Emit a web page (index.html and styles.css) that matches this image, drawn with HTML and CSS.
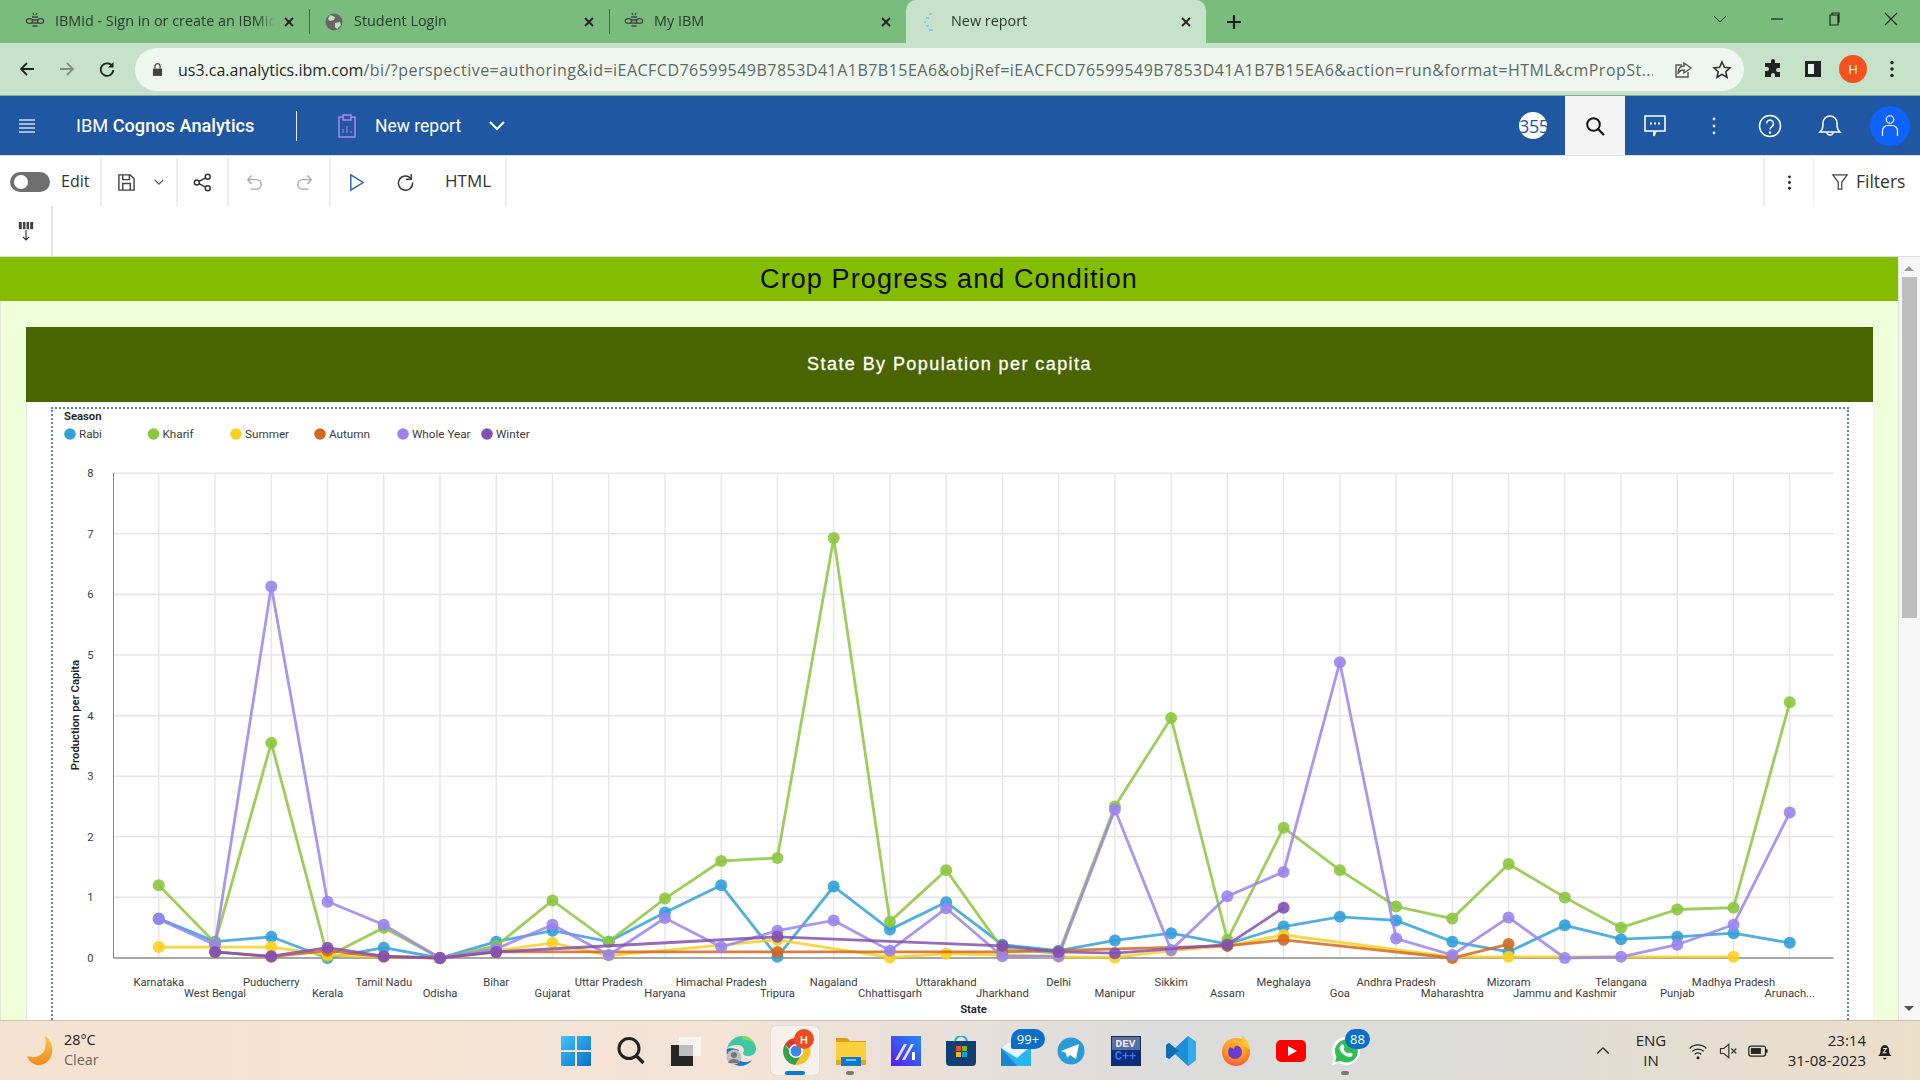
FILE: index.html
```html
<!DOCTYPE html>
<html lang="en">
  <head>
    <meta charset="utf-8" />
    <meta name="viewport" content="width=device-width, initial-scale=1" />
    <title>New report</title>
    <link rel="stylesheet" href="styles.css">
    <script src="chart.js"></script>
  </head>
  <body>
    <!-- browser tabs -->
    <div class="tabstrip">
      <div class="tab">
        <svg class="favicon" viewBox="0 0 20 20"><g fill="none" stroke="#444" stroke-width="1.3"><ellipse cx="4.5" cy="9" rx="3.2" ry="2.4"/><ellipse cx="15.5" cy="9" rx="3.2" ry="2.4"/><path d="M7 5h6M6.5 8h7M6.5 11h7M7.5 14h5M9 3l-1-2M11 3l1-2"/></g></svg>
        <span class="tab-title">IBMid - Sign in or create an IBMid</span>
        <svg class="tab-x" viewBox="0 0 12 12"><path d="M2 2l8 8M10 2l-8 8" stroke="#222" stroke-width="1.8"/></svg>
      </div>
      <div class="tab">
        <svg class="favicon" viewBox="0 0 20 20"><circle cx="10" cy="10" r="8.5" fill="#666"/><path d="M6 3l5 2-1 3-4 1-2-2zM11 11l5-1 1 3-4 4-2-2z" fill="#c5dcc6"/></svg>
        <span class="tab-title">Student Login</span>
        <svg class="tab-x" viewBox="0 0 12 12"><path d="M2 2l8 8M10 2l-8 8" stroke="#222" stroke-width="1.8"/></svg>
      </div>
      <div class="tab tab-last">
        <svg class="favicon" viewBox="0 0 20 20"><g fill="none" stroke="#444" stroke-width="1.3"><ellipse cx="4.5" cy="9" rx="3.2" ry="2.4"/><ellipse cx="15.5" cy="9" rx="3.2" ry="2.4"/><path d="M7 5h6M6.5 8h7M6.5 11h7M7.5 14h5M9 3l-1-2M11 3l1-2"/></g></svg>
        <span class="tab-title">My IBM</span>
        <svg class="tab-x" viewBox="0 0 12 12"><path d="M2 2l8 8M10 2l-8 8" stroke="#222" stroke-width="1.8"/></svg>
      </div>
      <div class="tab tab-active">
        <svg class="favicon" viewBox="0 0 20 20"><path d="M11 2H8M8 6H5M5 10H3M5 14h3M8 18h4" stroke="#6ec3e8" stroke-width="1.6" fill="none"/></svg>
        <span class="tab-title">New report</span>
        <svg class="tab-x" viewBox="0 0 12 12"><path d="M2 2l8 8M10 2l-8 8" stroke="#222" stroke-width="1.8"/></svg>
      </div>
      <svg class="tab-plus" viewBox="0 0 16 16"><path d="M8 1v14M1 8h14" stroke="#1f1f1f" stroke-width="2.2"/></svg>
      <div class="win-btns">
        <svg viewBox="0 0 16 16"><path d="M2 5l6 6 6-6" fill="none" stroke="#333" stroke-width="1"/></svg>
        <svg viewBox="0 0 16 16"><path d="M2 8h12" stroke="#222" stroke-width="1.2"/></svg>
        <svg viewBox="0 0 16 16"><path d="M4 4h8v10H4zM6 4V2h7v9h-1" fill="none" stroke="#222" stroke-width="1.2"/></svg>
        <svg viewBox="0 0 16 16"><path d="M2 2l12 12M14 2L2 14" stroke="#222" stroke-width="1.1"/></svg>
      </div>
    </div>

    <!-- address bar -->
    <div class="addr-row">
      <div class="nav-btns">
        <svg viewBox="0 0 18 18"><path d="M16 9H3M9 3L3 9l6 6" fill="none" stroke="#222" stroke-width="1.8"/></svg>
        <svg viewBox="0 0 18 18"><path d="M2 9h13M9 3l6 6-6 6" fill="none" stroke="#7d9080" stroke-width="1.8"/></svg>
        <svg viewBox="0 0 18 18"><path d="M14.5 6.5A6.3 6.3 0 1 0 15.3 10" fill="none" stroke="#222" stroke-width="1.8"/><path d="M15.5 2v5.5H10z" fill="#222"/></svg>
      </div>
      <div class="urlbar">
        <svg class="lock" viewBox="0 0 12 16"><path d="M1 7h10v8H1z" fill="#444"/><path d="M3.2 7V4.5a2.8 2.8 0 0 1 5.6 0V7" fill="none" stroke="#444" stroke-width="1.4"/></svg>
        <span class="url"><b>us3.ca.analytics.ibm.com</b>/bi/?perspective=authoring&amp;id=iEACFCD76599549B7853D41A1B7B15EA6&amp;objRef=iEACFCD76599549B7853D41A1B7B15EA6&amp;action=run&amp;format=HTML&amp;cmPropSt...</span>
        <svg class="url-icon" viewBox="0 0 20 20"><path d="M9 5H3v12h12v-5" fill="none" stroke="#555" stroke-width="1.4"/><path d="M11 3l7 5-7 5v-3c-3 0-5 1-6 4 0-5 2-8 6-8z" fill="none" stroke="#555" stroke-width="1.4"/></svg>
        <svg class="url-icon" viewBox="0 0 20 20"><path d="M10 2l2.4 5.3 5.6.6-4.2 3.8 1.2 5.6L10 14.4l-5 2.9 1.2-5.6L2 7.9l5.6-.6z" fill="none" stroke="#333" stroke-width="1.6"/></svg>
      </div>
      <div class="ext-btns">
        <svg viewBox="0 0 20 20"><path d="M8 2a2 2 0 0 1 4 0v2h5v5h-2a2 2 0 0 0 0 4h2v5h-5v-2a2 2 0 0 0-4 0v2H2v-6h2a2 2 0 0 0 0-4H2V4h6z" fill="#222"/></svg>
        <svg viewBox="0 0 20 20"><path d="M2 2h16v16H2z" fill="#222"/><path d="M5 5h6v10H5z" fill="#e9f3ea"/></svg>
        <span class="avatar">H</span>
        <svg viewBox="0 0 20 20"><circle cx="10" cy="3.5" r="1.7" fill="#222"/><circle cx="10" cy="10" r="1.7" fill="#222"/><circle cx="10" cy="16.5" r="1.7" fill="#222"/></svg>
      </div>
    </div>

    <!-- cognos header -->
    <header class="app-head">
      <svg class="hamb" viewBox="0 0 16 14"><path d="M0 1h16M0 5h16M0 9h16M0 13h16" stroke="#cfdcf0" stroke-width="1.3"/></svg>
      <div class="brand">IBM <b>Cognos Analytics</b></div>
      <div class="head-div"></div>
      <svg class="clip" viewBox="0 0 20 24"><g fill="none" stroke="#a98cf2" stroke-width="1.4"><path d="M6 3H2v20h16V3h-4"/><path d="M6 1h8v5H6z"/><path d="M6 19v-4M10 19v-7M14 19v-2" stroke-width="1"/></g></svg>
      <span class="report-name">New report</span>
      <svg class="head-chev" viewBox="0 0 16 10"><path d="M1 1l7 7 7-7" fill="none" stroke="#fff" stroke-width="2"/></svg>
      <div class="head-right">
        <span class="counter">355</span>
        <div class="search-tile"><svg viewBox="0 0 20 20"><circle cx="8.5" cy="8.5" r="6.3" fill="none" stroke="#161616" stroke-width="2"/><path d="M13 13l6 6" stroke="#161616" stroke-width="2.2"/></svg></div>
        <svg class="h-ico h-chat" viewBox="0 0 24 24"><path d="M2 2h20v15H13l-2 5v-5H2z" fill="none" stroke="#fff" stroke-width="1.6"/><path d="M7 9.500h2M11 9.500h2M15 9.500h2" stroke="#fff" stroke-width="2"/></svg>
        <svg class="h-ico h-dots" viewBox="0 0 24 24"><circle cx="12" cy="5" r="1.400" fill="#dfe8f5"/><circle cx="12" cy="12" r="1.400" fill="#dfe8f5"/><circle cx="12" cy="19" r="1.400" fill="#dfe8f5"/></svg>
        <svg class="h-ico h-help" viewBox="0 0 24 24"><circle cx="12" cy="12" r="10.500" fill="none" stroke="#fff" stroke-width="1.500"/><path d="M8.500 9.500a3.500 3.500 0 1 1 5.500 3c-1.300.9-2 1.500-2 3" fill="none" stroke="#fff" stroke-width="1.500"/><circle cx="12" cy="18.500" r="1.200" fill="#fff"/></svg>
        <svg class="h-ico h-bell" viewBox="0 0 24 24"><path d="M12 2a7 7 0 0 0-7 7c0 6-1 7-3 9h20c-2-2-3-3-3-9a7 7 0 0 0-7-7z" fill="none" stroke="#fff" stroke-width="1.500"/><path d="M9 18a3 3 0 0 0 6 0" fill="none" stroke="#fff" stroke-width="1.500"/></svg>
        <div class="user"><svg viewBox="0 0 24 30"><circle cx="12" cy="7" r="5" fill="none" stroke="#fff" stroke-width="1.600"/><path d="M2 29v-7a7 7 0 0 1 7-7h6a7 7 0 0 1 7 7v7" fill="none" stroke="#fff" stroke-width="1.600"/></svg></div>
      </div>
    </header>

    <!-- report toolbar -->
    <div class="tools">
      <div class="tool-group tg-edit"><span class="toggle"></span><span class="tool-text">Edit</span></div>
      <div class="tool-group tg-save">
        <svg viewBox="0 0 20 20"><path d="M2 2h12l4 4v12H2z M6 2v5h7V2 M6 18v-7h8v7" fill="none" stroke="#444" stroke-width="1.500"/></svg>
        <svg class="tiny" viewBox="0 0 12 8"><path d="M1 1l5 5 5-5" fill="none" stroke="#555" stroke-width="1.300"/></svg>
      </div>
      <div class="tool-group tg-share">
        <svg viewBox="0 0 20 20"><g fill="none" stroke="#333" stroke-width="1.500"><circle cx="4" cy="10" r="2.600"/><circle cx="15.500" cy="4" r="2.600"/><circle cx="15.500" cy="16" r="2.600"/><path d="M6.300 8.800l7-3.600M6.300 11.200l7 3.600"/></g></svg>
      </div>
      <div class="tool-group tg-undo">
        <svg viewBox="0 0 20 20"><path d="M3 7h9a5 5 0 0 1 0 10H6M7 2.500L3 7l4 4.500" fill="none" stroke="#a8a8a8" stroke-width="1.500"/></svg>
        <svg viewBox="0 0 20 20"><path d="M17 7H8a5 5 0 0 0 0 10h6M13 2.500L17 7l-4 4.500" fill="none" stroke="#a8a8a8" stroke-width="1.500"/></svg>
      </div>
      <div class="tool-group tg-run">
        <svg viewBox="0 0 20 20"><path d="M4 2l13 8-13 8z" fill="none" stroke="#2a5fb4" stroke-width="1.500"/></svg>
        <svg viewBox="0 0 20 20"><path d="M15.500 5.500A7.500 7.500 0 1 0 17.500 10" fill="none" stroke="#333" stroke-width="1.500"/><path d="M16 1v5.500h-5.500" fill="none" stroke="#333" stroke-width="1.500"/></svg>
        <span class="tool-text html">HTML</span>
      </div>
      <div class="tool-fill"></div>
      <div class="tool-group tg-more"><svg viewBox="0 0 20 20"><circle cx="10" cy="4" r="1.500" fill="#222"/><circle cx="10" cy="10" r="1.500" fill="#222"/><circle cx="10" cy="16" r="1.500" fill="#222"/></svg></div>
      <div class="tool-group tg-filter">
        <svg viewBox="0 0 20 20"><path d="M2 2h16l-6 8v8H8v-8z" fill="none" stroke="#444" stroke-width="1.400"/></svg>
        <span class="tool-text filters">Filters</span>
      </div>
    </div>
    <div class="tools-two">
      <div class="tool-cell"><svg viewBox="0 0 20 24"><path d="M2 2h16v8H2z" fill="#444"/><path d="M6 2v8M10 2v8M14 2v8" stroke="#fff" stroke-width="1.200"/><path d="M10 11v11M6.500 18.500l3.500 3.500 3.500-3.500" fill="none" stroke="#333" stroke-width="1.300"/></svg></div>
    </div>

    <!-- the report itself -->
    <div class="viewport">
      <main class="report">
        <h1 class="rep-title">Crop Progress and Condition</h1>
        <div class="rep-body">
          <h2 class="rep-sub">State By Population per capita</h2>
          <div class="chart-panel">
            <div class="chart-box" id="chartBox"></div>
          </div>
        </div>
      </main>
      <aside class="scroll">
        <span class="arrow-up"></span>
        <span class="thumb"></span>
        <span class="arrow-down"></span>
      </aside>
    </div>

    <!-- windows taskbar -->
    <footer class="taskbar">
      <div class="weather">
        <svg viewBox="0 0 28 32"><defs><linearGradient id="moon" x1="0" y1="0" x2="0" y2="1"><stop offset="0" stop-color="#f7c845"/><stop offset="1" stop-color="#f08a1d"/></linearGradient></defs><path d="M19 1c9 6 10 19 2 26-7 6-17 3-20-6 8 3 15 0 18-7 1-4 1-8 0-13z" fill="url(#moon)"/></svg>
        <div class="weather-txt"><span>28°C</span><span class="grey">Clear</span></div>
      </div>
      <div class="apps">
        <div class="app"><svg viewBox="0 0 30 30"><defs><linearGradient id="win" x1="0" y1="0" x2="1" y2="1"><stop offset="0" stop-color="#3ec6f7"/><stop offset="1" stop-color="#0a6fc9"/></linearGradient></defs><path d="M0 1a1 1 0 0 1 1-1h13v14H0zM16 0h13a1 1 0 0 1 1 1v13H16zM0 16h14v14H1a1 1 0 0 1-1-1zM16 16h14v13a1 1 0 0 1-1 1H16z" fill="url(#win)"/></svg></div>
        <div class="app"><svg viewBox="0 0 30 30"><circle cx="13" cy="12.500" r="10" fill="none" stroke="#222" stroke-width="3"/><path d="M20.500 20l7 7" stroke="#222" stroke-width="3.400"/></svg></div>
        <div class="app"><svg viewBox="0 0 30 30"><path d="M8 1h22v19H8z" fill="#fbf8f6" opacity=".75"/><path d="M0 9h22v21H0z" fill="#262626"/><path d="M8 9h14v11H8z" fill="#bdbdbd"/></svg></div>
        <div class="app"><svg viewBox="0 0 30 30"><path d="M1 13C3 4 10 0 16 0c8 0 14 6 14 13 0 5-4 7-8 7-3 0-5-1-5-3 0-1 1-2 1-3 0-3-3-5-7-5-5 0-9 2-10 4z" fill="#3fc6a3"/><path d="M16 0c8 0 14 6 14 13 0-5-5-9-11-9-2 0-4-2-3-4z" fill="#7fd95b"/><path d="M1 13c-2 9 5 17 13 17 5 0 9-2 12-6-3 2-8 3-11 1-4-2-5-7-2-11-5-2-10-2-12-1z" fill="#1c78d0"/><circle cx="8" cy="21" r="7.500" fill="#bfc0c0"/><circle cx="8" cy="19" r="3" fill="#777"/><path d="M2 27c1-3 3-4 6-4s5 1 6 4z" fill="#777"/></svg></div>
        <div class="app app-on">
          <svg viewBox="0 0 30 30"><path d="M4 8A14 14 0 0 1 28 9H15a6 6 0 0 0-6 5z" fill="#d93a2e"/><path d="M28 9a14 14 0 0 1-14 20l7-11a7 7 0 0 0-1-9z" fill="#f6c026"/><path d="M4 8a14 14 0 0 0 10 21l7-11a7 7 0 0 1-11-1z" fill="#33a150"/><circle cx="15" cy="15" r="7" fill="#fff"/><circle cx="15" cy="15" r="5.500" fill="#4285e8"/></svg>
          <span class="badge-h">H</span>
        </div>
        <div class="app app-open"><svg viewBox="0 0 30 30"><path d="M0 2h11l3 3h16v6H0z" fill="#dc9f10"/><path d="M0 6h30v22H0z" fill="#fad13c"/><path d="M0 24h30v5H0z" fill="#e6a913"/><path d="M5 21h20v9H5z" fill="#0f78c8"/><path d="M10 24h10" stroke="#9ed6f7" stroke-width="1.500"/></svg></div>
        <div class="app"><svg viewBox="0 0 30 30"><defs><linearGradient id="maple" x1="0" y1="1" x2="1" y2="0"><stop offset="0" stop-color="#5a1bf0"/><stop offset="1" stop-color="#1f8df0"/></linearGradient></defs><path d="M0 0h30v30H0z" fill="url(#maple)"/><path d="M4 24L13 8h3L7 24zM11 24l9-16h3L14 24z" fill="#e7e2ff"/><path d="M21 16h3v8h-3z" fill="#fff"/></svg></div>
        <div class="app"><svg viewBox="0 0 30 30"><path d="M9 6a6 6 0 0 1 12 0" fill="none" stroke="#28a7e0" stroke-width="2"/><path d="M0 5h30v21a4 4 0 0 1-4 4H4a4 4 0 0 1-4-4z" fill="#113f74"/><path d="M10 10h5v5h-5z" fill="#f25022"/><path d="M16 10h5v5h-5z" fill="#7fba00"/><path d="M10 16h5v5h-5z" fill="#ffb900"/><path d="M16 16h5v5h-5z" fill="#00a4ef"/></svg></div>
        <div class="app"><svg viewBox="0 0 30 30"><path d="M0 12l6-5h24v23H0z" fill="#29b5ee"/><path d="M0 12l16 10L30 10v-3H6z" fill="#e8f6fc"/><path d="M0 12l16 18H0z" fill="#1a85cf"/></svg><span class="badge-n badge-wide">99+</span></div>
        <div class="app"><svg viewBox="0 0 30 30"><circle cx="15" cy="15" r="13.500" fill="#2a9bd6"/><path d="M5 15L23 8l-3 15-6-4-3 3-1-5z" fill="#fff"/></svg></div>
        <div class="app"><div class="dev-ico"><span>DEV</span><span class="dev-c">C++</span></div></div>
        <div class="app"><svg viewBox="0 0 30 30"><path d="M22 0l8 6v18l-8 6-13-12-6 5-3-2V9l3-2 6 5z" fill="#1d8fd8"/><path d="M22 0l8 6v18l-8 6z" fill="#35a9ea"/><path d="M9 12L3 7 0 9v12l3 2 6-5 4-3z" fill="#0f6db3"/></svg></div>
        <div class="app"><svg viewBox="0 0 30 30"><defs><radialGradient id="ff" cx=".5" cy=".3" r=".8"><stop offset="0" stop-color="#ffcf3a"/><stop offset=".6" stop-color="#ff8a1f"/><stop offset="1" stop-color="#f23f5a"/></radialGradient></defs><circle cx="15" cy="16" r="14" fill="url(#ff)"/><path d="M21 0c6 5 8 9 8 14l-9-6z" fill="#ffc53a"/><circle cx="14" cy="16" r="7" fill="#6b3bc9"/><path d="M7 10c3-4 9-4 12-1-4 0-6 2-6 4z" fill="#ff9a2a"/></svg></div>
        <div class="app"><svg viewBox="0 0 30 30"><rect x="0" y="4" width="30" height="22" rx="5" fill="#f00"/><path d="M12 10l9 5-9 5z" fill="#fff"/></svg></div>
        <div class="app app-open"><svg viewBox="0 0 30 30"><path d="M1 29l2-7A14 14 0 1 1 8 27z" fill="#fff"/><path d="M4 26l1.500-5a11.500 11.500 0 1 1 4 4z" fill="#2fbf55"/><path d="M10 9c1-1 2-1 2.500 0l1 2.500-1 1.500c1 2 2.500 3.500 4.500 4.500l1.500-1 2.500 1c1 .5.5 2-.5 3-2 1.500-6 0-9-3s-4-6-1.500-8.500z" fill="#fff"/></svg><span class="badge-n">88</span></div>
      </div>
      <div class="tray">
        <svg class="tray-chev" viewBox="0 0 16 10"><path d="M1.500 8.500L8 2l6.500 6.500" fill="none" stroke="#222" stroke-width="1.500"/></svg>
        <div class="lang"><span>ENG</span><span>IN</span></div>
        <svg class="tray-ico" viewBox="0 0 24 24"><path d="M2 9a14 14 0 0 1 20 0M5 12.500a10 10 0 0 1 14 0M8 16a5.500 5.500 0 0 1 8 0" fill="none" stroke="#222" stroke-width="1.500"/><circle cx="12" cy="20" r="1.800" fill="#222"/></svg>
        <svg class="tray-ico" viewBox="0 0 24 24"><path d="M3 9h4l6-5v16l-6-5H3z" fill="none" stroke="#333" stroke-width="1.400"/><path d="M16 9l6 6M22 9l-6 6" stroke="#333" stroke-width="1.400"/></svg>
        <svg class="tray-ico" viewBox="0 0 24 24"><rect x="1" y="6" width="20" height="12" rx="2.500" fill="none" stroke="#222" stroke-width="1.500"/><rect x="3.500" y="8.500" width="12" height="7" fill="#222"/><path d="M22.500 10v4" stroke="#222" stroke-width="2"/></svg>
        <div class="clock"><span>23:14</span><span>31-08-2023</span></div>
        <svg class="tray-bell" viewBox="0 0 20 24"><path d="M8 5a6 6 0 0 0-5 6c0 4-1 5-3 7h16c-2-2-3-3-3-7a6 6 0 0 0-5-6z" fill="#222"/><path d="M6 20h4a2 2 0 0 1-4 0z" fill="#222"/><path d="M6 9h4l-4 5h4M13 2h5l-5 5h5" fill="none" stroke="#e8e2d8" stroke-width="1.200"/></svg>
      </div>
    </footer>
  </body>
</html>
```

FILE: styles.css
```css
* {
  box-sizing: border-box;
}

html,
body {
  margin: 0;
  height: 100%;
  overflow: hidden;
}

body {
  font-family: "Open Sans", "Noto Sans", sans-serif;
  color: #222;
  background: #fff;
}

svg {
  display: block;
  flex: none;
}

/* browser tabs */
.tabstrip {
  display: flex;
  align-items: center;
  height: 43px;
  padding-left: 10px;
  background: #7abc7e;
}

.tab {
  display: flex;
  align-items: center;
  width: 300px;
  height: 100%;
  padding: 0 14px 0 15px;
  position: relative;
  font-size: 14.4px;
  color: #2b3a2c;
}

.tab:first-child {
  width: 299px;
}

.tab:nth-child(2)::before,
.tab-last::before {
  content: "";
  position: absolute;
  left: 0;
  top: 9px;
  bottom: 9px;
  width: 1px;
  background: #3f6b44;
}

.tab-last {
  width: 297px;
}

.tab-active {
  width: 300px;
  background: #c6e2c8;
  border-radius: 10px 10px 0 0;
}

.favicon {
  width: 20px;
  height: 20px;
}

.tab-title {
  flex: 1;
  margin: -2px 0 0 10px;
  white-space: nowrap;
  overflow: hidden;
  -webkit-mask-image: linear-gradient(to right, #000 92%, transparent);
  mask-image: linear-gradient(to right, #000 92%, transparent);
}

.tab-x {
  width: 12px;
  height: 12px;
  margin-left: 8px;
}

.tab-plus {
  width: 16px;
  height: 16px;
  margin-left: 20px;
}

.win-btns {
  display: flex;
  gap: 41px;
  margin-left: auto;
  padding-right: 21px;
  margin-top: -6px;
}

.win-btns svg {
  width: 16px;
  height: 16px;
}

/* address bar */
.addr-row {
  display: flex;
  align-items: center;
  height: 53px;
  background: #c6e2c8;
  border-bottom: 1px solid #8aa88c;
}

.nav-btns {
  display: flex;
  gap: 22px;
  width: 135px;
  padding-left: 18px;
}

.nav-btns svg {
  width: 18px;
  height: 18px;
}

.urlbar {
  display: flex;
  align-items: center;
  width: 1609px;
  height: 43px;
  margin-top: 1px;
  padding: 0 12px 0 17px;
  background: #eef6ef;
  border-radius: 22px;
}

.lock {
  width: 11px;
  height: 15px;
}

.url {
  width: 1478px;
  margin-left: 15px;
  font-size: 16px;
  letter-spacing: 0.48px;
  color: #5d6a5f;
  white-space: nowrap;
  overflow: hidden;
}

.url b {
  font-weight: 400;
  letter-spacing: 0;
  color: #1e2a1f;
}

.url-icon {
  width: 20px;
  height: 20px;
  margin-left: 20px;
}

.url-icon:last-child {
  margin-left: 19px;
}

.ext-btns {
  display: flex;
  align-items: center;
  gap: 20px;
  margin-left: 19px;
}

.ext-btns svg {
  width: 20px;
  height: 20px;
}

.ext-btns svg:last-child {
  margin-left: -1px;
}

.avatar {
  display: grid;
  place-items: center;
  width: 28px;
  height: 28px;
  margin: 0 -4px;
  border-radius: 50%;
  font-size: 13px;
  color: #fff;
  background: #f4511e;
}

/* cognos header */
.app-head {
  display: flex;
  align-items: center;
  height: 60px;
  padding-left: 19px;
  background: #1f57a3;
  border-bottom: 1px solid #dde2e8;
  color: #fff;
}

.hamb {
  width: 16px;
  height: 14px;
}

.brand {
  width: 185px;
  margin-left: 41px;
  font-family: Roboto, sans-serif;
  font-size: 18.2px;
  white-space: nowrap;
}

.brand b {
  font-weight: 500;
}

.head-div {
  width: 1px;
  height: 30px;
  margin-left: 35px;
  background: #e8eef7;
}

.clip {
  width: 20px;
  height: 24px;
  margin-left: 40px;
}

.report-name {
  margin-left: 18px;
  font-family: Roboto, sans-serif;
  font-size: 17.5px;
}

.head-chev {
  width: 16px;
  height: 10px;
  margin-left: 28px;
}

.head-right {
  display: flex;
  align-items: center;
  height: 100%;
  margin-left: auto;
}

.counter {
  display: grid;
  place-items: center;
  width: 28px;
  height: 27px;
  margin-right: 18px;
  border-radius: 50%;
  overflow: hidden;
  font-size: 18px;
  letter-spacing: -0.4px;
  white-space: nowrap;
  color: #1f57a3;
  background: #fff;
}

.search-tile {
  display: grid;
  place-items: center;
  width: 60px;
  height: 100%;
  background: #f4f4f4;
}

.search-tile svg {
  width: 20px;
  height: 20px;
}

.h-ico {
  width: 24px;
  height: 24px;
}

.h-chat {
  margin-left: 18px;
}

.h-dots {
  margin-left: 35px;
}

.h-help {
  margin-left: 32px;
}

.h-bell {
  margin-left: 36px;
}

.user {
  display: grid;
  place-items: center;
  width: 40px;
  height: 40px;
  margin: 0 10px 0 28px;
  border-radius: 50%;
  background: #0f62fe;
}

.user svg {
  width: 18px;
  height: 25px;
}

/* report toolbar */
.tools {
  display: flex;
  height: 50px;
  background: #fff;
}

.tool-group {
  display: flex;
  align-items: center;
  height: 48px;
  margin-top: 2px;
  border-right: 2px solid #ececec;
}

.tool-group svg {
  width: 19px;
  height: 19px;
}

.tool-group svg.tiny {
  width: 10px;
  height: 7px;
  margin-left: 18px;
}

.tool-text {
  margin-top: -3px;
  font-size: 16px;
  color: #333;
}

.tg-edit {
  width: 102px;
  padding-left: 10px;
}

.toggle {
  display: block;
  position: relative;
  width: 40px;
  height: 20px;
  margin-right: 11px;
  border-radius: 10px;
  background: #6f6f6f;
}

.toggle::after {
  content: "";
  position: absolute;
  left: 4px;
  top: 3px;
  width: 14px;
  height: 14px;
  border-radius: 50%;
  background: #fff;
}

.tg-save {
  width: 76px;
  padding-left: 15px;
}

.tg-share {
  width: 51px;
  padding-left: 15px;
}

.tg-undo {
  width: 102px;
  padding-left: 16px;
  gap: 31px;
}

.tg-run {
  width: 176px;
  padding-left: 16px;
  gap: 30px;
}

.tg-run .html {
  margin-left: 0;
  font-size: 17px;
}

.tool-fill {
  flex: 1;
}

.tg-more {
  width: 51px;
  padding-left: 15px;
  border-left: 2px solid #ececec;
  border-right: 1px solid #f0f0f0;
}

.tg-filter {
  width: 106px;
  padding-left: 17px;
  gap: 7px;
  border-right: 0;
}

.tg-filter svg {
  width: 18px;
  height: 18px;
}

.filters {
  font-size: 17.5px;
}

.tools-two {
  height: 51px;
  border-bottom: 1px solid #dcdcdc;
}

.tool-cell {
  display: grid;
  place-items: center;
  width: 53px;
  height: 100%;
  border-right: 2px solid #e4e4e4;
}

.tool-cell svg {
  width: 18px;
  height: 22px;
}

/* report */
.viewport {
  display: flex;
  height: 763px;
}

.report {
  width: 1899px;
  overflow: hidden;
  border-right: 1px solid #e2e2e2;
}

.rep-title {
  height: 44px;
  margin: 0;
  font-family: "Liberation Sans", Arial, sans-serif;
  font-size: 27px;
  font-weight: 400;
  line-height: 45px;
  letter-spacing: 1.1px;
  text-align: center;
  color: #0c0c0c;
  background: #84bd00;
}

.rep-body {
  height: 719px;
  padding: 26px 25px 0 25px;
  background: #eeffd9;
  border-left: 1px solid #dfe6cf;
}

.rep-sub {
  height: 75px;
  margin: 0;
  font-family: "Liberation Sans", Arial, sans-serif;
  font-size: 18px;
  font-weight: 400;
  line-height: 75px;
  letter-spacing: 1.42px;
  text-align: center;
  color: #fff;
  background: #4a6500;
  -webkit-text-stroke: 0.3px #fff;
}

.chart-panel {
  height: 618px;
  padding: 5px 24px 0;
  background: #fff;
  border-left: 1px solid #e2e2e2;
}

.chart-box {
  width: 1798px;
  height: 613px;
  border: 2px dotted #5b84c4;
  border-bottom: 0;
}

.chart-box svg {
  width: 1794px;
  height: 611px;
}

.chart-box text {
  font-family: Roboto, "Noto Sans", sans-serif;
  font-size: 11.2px;
  fill: #3c3c3c;
}

.chart-box text.legend {
  font-size: 11.7px;
}

.chart-box text.strong {
  font-size: 11.3px;
  font-weight: 600;
  fill: #222;
}

/* scrollbar */
.scroll {
  flex: 1;
  position: relative;
  background: #f6f6f6;
}

.thumb {
  position: absolute;
  left: 3px;
  right: 3px;
  top: 20px;
  height: 341px;
  background: #bdbdbd;
}

.arrow-up,
.arrow-down {
  position: absolute;
  left: 5px;
  border-left: 5px solid transparent;
  border-right: 5px solid transparent;
}

.arrow-up {
  top: 9px;
  border-bottom: 5px solid #9a9a9a;
}

.arrow-down {
  bottom: 9px;
  border-top: 5px solid #505050;
}

/* taskbar */
.taskbar {
  display: grid;
  grid-template-columns: 548px 825px 1fr;
  align-items: center;
  height: 60px;
  background: linear-gradient(to right, #f6e2d0 0%, #f4e3d6 38%, #dcdcdc 60%, #dcdcda 75%, #ecdfca 100%);
  border-top: 1px solid #c9c0b6;
}

.weather {
  display: flex;
  align-items: center;
  padding-left: 26px;
}

.weather svg {
  width: 28px;
  height: 32px;
}

.weather-txt {
  display: flex;
  flex-direction: column;
  margin: -2px 0 0 10px;
  font-size: 14.4px;
  line-height: 20px;
}

.grey {
  color: #666;
}

.apps {
  display: flex;
  height: 100%;
  align-items: center;
}

.app {
  display: grid;
  place-items: center;
  position: relative;
  width: 55px;
  height: 100%;
}

.app svg {
  width: 30px;
  height: 30px;
}

.app-on::before {
  content: "";
  position: absolute;
  left: 3px;
  right: 4px;
  top: 5px;
  bottom: 5px;
  border-radius: 5px;
  background: #f8f0ea;
  box-shadow: 0 0 1px #bbb;
}

.app-on svg {
  position: relative;
}

.app-on::after {
  content: "";
  position: absolute;
  left: 17px;
  bottom: 5px;
  width: 20px;
  height: 4px;
  border-radius: 2px;
  background: #0a78d4;
}

.app-open::after {
  content: "";
  position: absolute;
  left: 23px;
  bottom: 5px;
  width: 8px;
  height: 4px;
  border-radius: 2px;
  background: #777;
}

.badge-h {
  display: grid;
  place-items: center;
  position: absolute;
  left: 26px;
  top: 8px;
  width: 20px;
  height: 20px;
  border-radius: 50%;
  font-size: 11px;
  font-weight: 600;
  color: #fff;
  background: #ea4c1d;
}

.badge-n {
  position: absolute;
  left: 27px;
  top: 8px;
  min-width: 25px;
  height: 20px;
  padding: 0 4px;
  border-radius: 10px;
  font-size: 13px;
  line-height: 20px;
  text-align: center;
  color: #fff;
  background: #0a6fc9;
}

.badge-wide {
  left: 23px;
  min-width: 34px;
  border-bottom-left-radius: 2px;
}

.dev-ico {
  display: flex;
  flex-direction: column;
  width: 30px;
  height: 30px;
  padding-top: 1px;
  font-family: "Liberation Mono", monospace;
  font-size: 11px;
  font-weight: 700;
  line-height: 13px;
  text-align: center;
  color: #e9eef7;
  background: linear-gradient(#5b6f9e 0 45%, #0a2c80 45% 100%);
  border: 1px solid #1a2a4a;
}

.dev-c {
  font-size: 12px;
  color: #3b78ea;
}

.tray {
  display: flex;
  align-items: center;
  padding-left: 223px;
}

.tray-chev {
  width: 14px;
  height: 9px;
}

.lang {
  display: flex;
  flex-direction: column;
  align-items: center;
  width: 44px;
  margin: -2px 0 0 19px;
  font-size: 15px;
  line-height: 20px;
}

.tray-ico {
  width: 20px;
  height: 20px;
  margin-left: 10px;
}

.lang + .tray-ico {
  margin-left: 15px;
}

.clock {
  display: flex;
  flex-direction: column;
  align-items: flex-end;
  width: 98px;
  margin-top: -2px;
  font-size: 15px;
  line-height: 20px;
}

.tray-bell {
  width: 17px;
  height: 22px;
  margin-left: 12px;
}
```

FILE: chart.js
```js
// state by population chart, drawn in page coordinates through the viewBox
const states = ['Karnataka', 'West Bengal', 'Puducherry', 'Kerala', 'Tamil Nadu', 'Odisha', 'Bihar', 'Gujarat',
  'Uttar Pradesh', 'Haryana', 'Himachal Pradesh', 'Tripura', 'Nagaland', 'Chhattisgarh', 'Uttarakhand', 'Jharkhand',
  'Delhi', 'Manipur', 'Sikkim', 'Assam', 'Meghalaya', 'Goa', 'Andhra Pradesh', 'Maharashtra', 'Mizoram',
  'Jammu and Kashmir', 'Telangana', 'Punjab', 'Madhya Pradesh', 'Arunach...']

// null = no value for that state, the line just carries on
const _ = null
const series = [
  { name: 'Rabi', color: '#32a0d9', lx: 70,
    v: [.65, .27, .35, 0, .17, 0, .27, .45, .27, .75, 1.2, .02, 1.18, .47, .92, .22, .12, .29, .41, .23, .52, .68, .62, .27, .1, .54, .31, .35, .41, .25] },
  { name: 'Kharif', color: '#8cc63e', lx: 153.5,
    v: [1.2, .25, 3.55, .03, .5, 0, .2, .95, .27, .98, 1.6, 1.65, 6.93, .6, 1.45, .15, .08, 2.5, 3.96, .3, 2.15, 1.45, .85, .65, 1.55, 1, .5, .8, .83, 4.22] },
  { name: 'Summer', color: '#f8d020', lx: 236,
    v: [.18, _, .18, .05, _, 0, .12, .25, .04, _, _, .3, _, .01, .07, .05, .02, .01, .12, .2, .38, _, _, .02, .02, _, _, _, .02, _] },
  { name: 'Autumn', color: '#d2691e', lx: 320,
    v: [_, .1, .02, .12, .02, 0, .1, _, _, _, _, .1, _, _, _, .1, _, _, _, .2, .3, _, _, 0, .23, _, _, _, _, _] },
  { name: 'Whole Year', color: '#9a84ec', lx: 403,
    v: [.64, .22, 6.13, .93, .55, 0, .15, .55, .05, .66, .18, .45, .62, .12, .82, .03, .03, 2.45, .13, 1.02, 1.42, 4.88, .32, .05, .67, 0, .02, .22, .55, 2.4] },
  { name: 'Winter', color: '#8450b0', lx: 487,
    v: [_, .1, .03, .17, .03, 0, .1, _, _, _, _, .35, _, _, _, .2, .1, .08, _, .22, .83, _, _, _, _, _, _, _, _, _] },
]

const plot = { left: 113.5, right: 1833.5, y0: 958, unit: 60.6, first: 158.8, step: 56.24 }

const xAt = function (i) {
  return plot.first + i * plot.step
}
const yAt = function (v) {
  return plot.y0 - v * plot.unit
}

function el(name, attrs, text) {
  const node = document.createElementNS('http://www.w3.org/2000/svg', name)
  for (const k in attrs) {
    node.setAttribute(k, attrs[k])
  }
  if (text !== undefined) {
    node.textContent = text
  }
  return node
}

document.addEventListener('DOMContentLoaded', function () {
  const svg = el('svg', { viewBox: '53 409 1794 611' })

  // legend
  svg.appendChild(el('text', { x: 64, y: 420, class: 'strong' }, 'Season'))
  series.forEach(function (s) {
    svg.appendChild(el('circle', { cx: s.lx, cy: 434, r: 5.8, fill: s.color }))
    svg.appendChild(el('text', { x: s.lx + 9, y: 438, class: 'legend' }, s.name))
  })

  // grid
  for (let n = 1; n <= 8; n++) {
    svg.appendChild(el('line', { x1: plot.left, x2: plot.right, y1: yAt(n), y2: yAt(n), stroke: '#e6e6e6', 'stroke-width': 1.6 }))
  }
  states.forEach(function (name, i) {
    svg.appendChild(el('line', { x1: xAt(i), x2: xAt(i), y1: yAt(8), y2: plot.y0, stroke: '#e6e6e6', 'stroke-width': 1.4 }))
    // labels take turns on two rows so they fit
    svg.appendChild(el('text', { x: xAt(i), y: i % 2 ? 997 : 986, 'text-anchor': 'middle' }, name))
  })
  for (let n = 0; n <= 8; n++) {
    svg.appendChild(el('text', { x: 90.5, y: yAt(n) + 4, 'text-anchor': 'middle' }, n))
  }
  svg.appendChild(el('line', { x1: plot.left, x2: plot.left, y1: yAt(8), y2: plot.y0, stroke: '#8a8a8a' }))
  svg.appendChild(el('line', { x1: plot.left, x2: plot.right, y1: plot.y0, y2: plot.y0, stroke: '#8a8a8a', 'stroke-width': 1.4 }))

  // axis titles
  svg.appendChild(el('text', { x: 973.5, y: 1013, 'text-anchor': 'middle', class: 'strong' }, 'State'))
  svg.appendChild(el('text', { x: 0, y: 0, 'text-anchor': 'middle', class: 'strong', transform: 'translate(79 715) rotate(-90)' }, 'Production per Capita'))

  // lines and points
  series.forEach(function (s) {
    const pts = []
    s.v.forEach(function (v, i) {
      if (v !== null) {
        pts.push(xAt(i).toFixed(1) + ',' + yAt(v).toFixed(1))
      }
    })
    svg.appendChild(el('polyline', { points: pts.join(' '), fill: 'none', stroke: s.color, 'stroke-width': 2.8, 'stroke-opacity': 0.85 }))
    s.v.forEach(function (v, i) {
      if (v !== null) {
        svg.appendChild(el('circle', { cx: xAt(i), cy: yAt(v), r: 6, fill: s.color, 'fill-opacity': 0.9 }))
      }
    })
  })

  document.getElementById('chartBox').appendChild(svg)
})
```
